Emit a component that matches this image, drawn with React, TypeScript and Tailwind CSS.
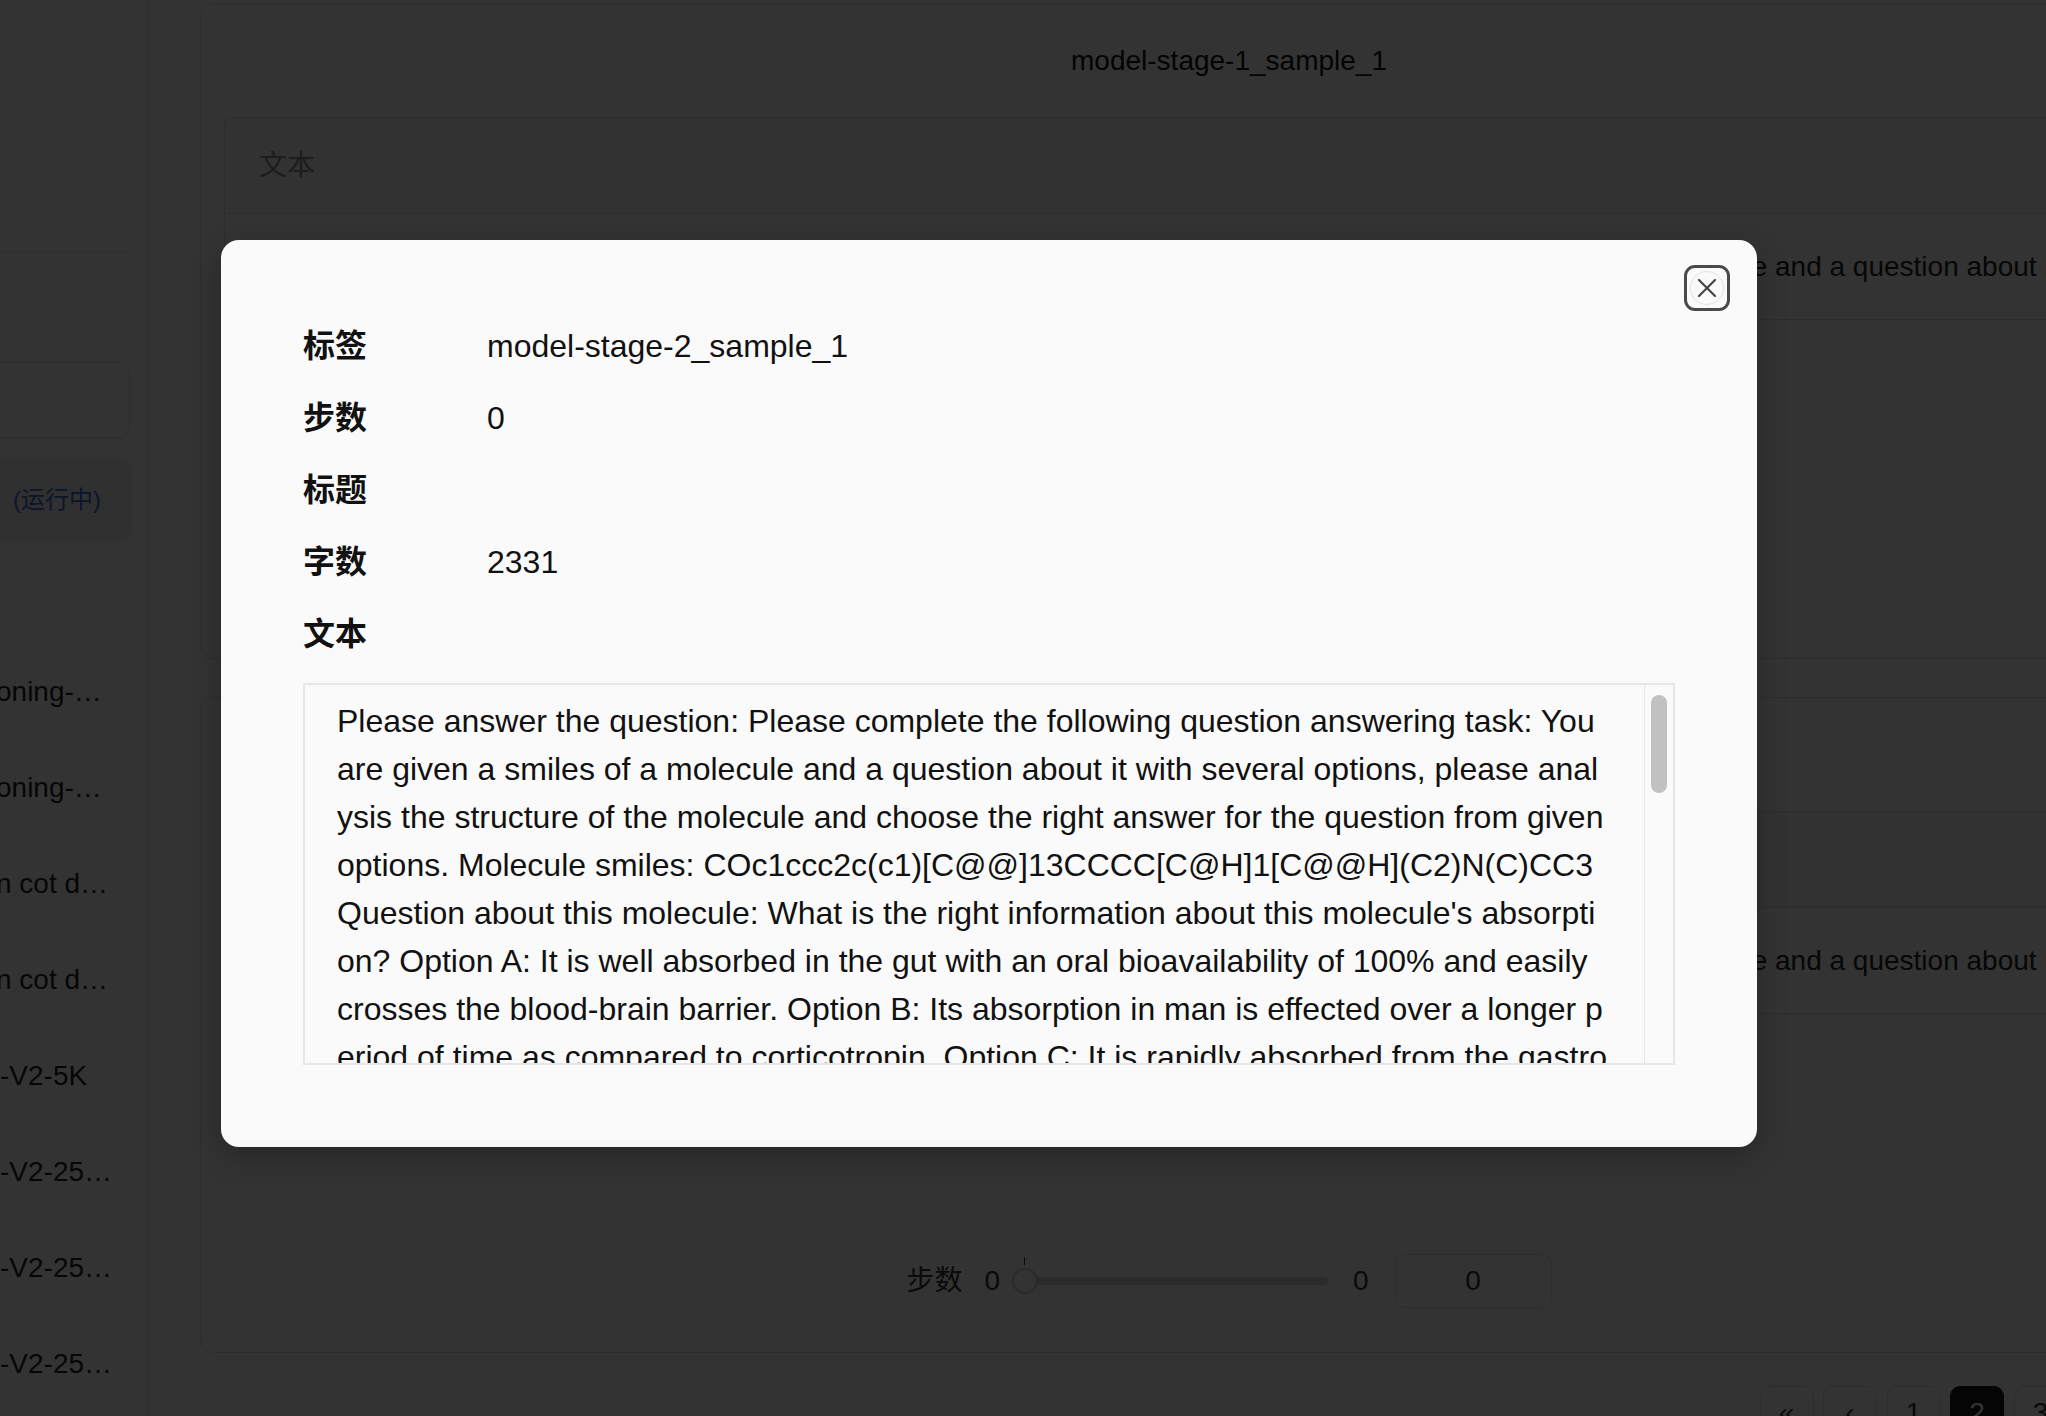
import { X } from 'lucide-react'

const PROMPT =
  "Please answer the question: Please complete the following question answering task: You are given a smiles of a molecule and a question about it with several options, please analysis the structure of the molecule and choose the right answer for the question from given options. Molecule smiles: COc1ccc2c(c1)[C@@]13CCCC[C@H]1[C@@H](C2)N(C)CC3 Question about this molecule: What is the right information about this molecule's absorption? Option A: It is well absorbed in the gut with an oral bioavailability of 100% and easily crosses the blood-brain barrier. Option B: Its absorption in man is effected over a longer period of time as compared to corticotropin. Option C: It is rapidly absorbed from the gastrointestinal tract and is subject to extensive first-pass metabolism. Option D: It is poorly absorbed after oral administration."

// sidebar is scrolled, only the tail of each run name shows
const RUNS = [
  { name: 'oning-…', cut: true },
  { name: 'oning-…', cut: true },
  { name: 'n cot d…', cut: true },
  { name: 'n cot d…', cut: true },
  { name: '-V2-5K', cut: false },
  { name: '-V2-25…', cut: false },
  { name: '-V2-25…', cut: false },
  { name: '-V2-25…', cut: false },
]

const PAGES = ['«', '‹', '1', '2', '3', '4', '›', '»']

const DETAILS: [string, string][] = [
  ['标签', 'model-stage-2_sample_1'],
  ['步数', '0'],
  ['标题', ''],
  ['字数', '2331'],
  ['文本', ''],
]

function SampleCard({ title }: { title: string }) {
  return (
    <div className="flex h-[656px] flex-col rounded-[14px] border border-[#e0e0e0]">
      <div className="flex h-[113px] items-center justify-center text-[28px] text-[#111]">{title}</div>
      <div className="mx-[23px] overflow-hidden rounded-[8px] border border-[#e0e0e0]">
        <div className="flex h-[96px] items-center border-b border-[#e0e0e0] bg-[#fafafa] pl-[34px] text-[28px] text-[#8c8c8c]">
          文本
        </div>
        <div className="flex h-[105px] items-center overflow-hidden whitespace-nowrap pl-[34px] text-[28px] text-[#262626]">
          {PROMPT}
        </div>
      </div>
      <div className="mt-[240px] flex items-center justify-center text-[28px] text-[#333]">
        <span>步数</span>
        <span className="ml-[22px]">0</span>
        <div className="relative ml-[12px] flex h-[26px] w-[316px] items-center">
          <div className="absolute left-[13px] right-0 h-[8px] rounded-full bg-[#d4d4d4]" />
          <div className="absolute left-[12px] top-[-11px] h-[8px] w-[1px] bg-[#444]" />
          <div className="relative h-[26px] w-[26px] rounded-full border-2 border-[#cfcfcf] bg-white" />
        </div>
        <span className="ml-[25px]">0</span>
        <div className="ml-[26px] flex h-[54px] w-[157px] items-center justify-center rounded-[10px] border border-[#e0e0e0]">
          0
        </div>
      </div>
    </div>
  )
}

export default function App() {
  return (
    <div className="relative h-[1416px] w-[2046px] overflow-hidden bg-white font-['Liberation_Sans','Noto_Sans_CJK_SC',sans-serif] text-[#222]">
      <div className="flex h-full">
        <aside className="w-[149px] shrink-0 overflow-hidden border-r border-[#e2e2e2]">
          <div className="h-[252px] w-[132px] border-b border-[#e6e6e6]" />
          <div className="-ml-[20px] mt-[110px] h-[76px] w-[150px] rounded-[10px] border border-[#e2e2e2]" />
          <div className="-ml-[20px] mt-[19px] flex h-[86px] w-[152px] items-center rounded-[14px] bg-[#f0f0f0] pl-[33px] text-[24px] text-[#3b6fd8]">
            (运行中)
          </div>
          <ul className="mt-[101px]">
            {RUNS.map((r, i) => (
              <li
                key={i}
                className={`flex h-[96px] items-center whitespace-nowrap text-[28px] text-[#1f1f1f] ${r.cut ? '-ml-[4px]' : ''}`}
              >
                {r.name}
              </li>
            ))}
          </ul>
        </aside>

        <main className="min-w-0 flex-1 pl-[51px] pt-[3px]">
          <div className="w-[2058px]">
            <SampleCard title="model-stage-1_sample_1" />
            <div className="mt-[38px]">
              <SampleCard title="model-stage-2_sample_1" />
            </div>
            <div className="mt-[33px] flex justify-end gap-[9.5px]">
              {PAGES.map((p, i) => (
                <div
                  key={i}
                  className={`flex h-[54px] w-[54px] items-center justify-center rounded-[10px] border text-[28px] ${
                    p === '2' ? 'border-[#1a1a1a] bg-[#1a1a1a] text-white' : 'border-[#e0e0e0] text-[#333]'
                  }`}
                >
                  {p}
                </div>
              ))}
            </div>
          </div>
        </main>
      </div>

      {/* modal */}
      <div className="absolute inset-0 bg-black/80" />
      <div className="absolute inset-0 flex items-start pl-[221px] pt-[240px]">
        <div className="relative w-[1536px] rounded-[18px] bg-[#fafafa] p-[82px] text-[#111] shadow-[0_10px_30px_rgba(0,0,0,0.25)]">
          <button className="absolute right-[27px] top-[25px] flex h-[46px] w-[46px] items-center justify-center rounded-[11px] border-[3px] border-[#4a4a4a] text-[#444]">
            <div className="flex h-[34px] w-[34px] items-center justify-center rounded-full border border-[#e2e2e2]">
              <X size={38} strokeWidth={1.6} />
            </div>
          </button>

          <div className="flex flex-col gap-[24px]">
            {DETAILS.map(([k, v]) => (
              <div key={k} className="grid grid-cols-[184px_1fr] text-[32px] leading-[48px]">
                <span className="font-bold">{k}</span>
                <span>{v}</span>
              </div>
            ))}
            <div className="mt-[1px] flex h-[382px] border-2 border-[#e6e6e6] bg-[#fafafa]">
              <div className="min-w-0 flex-1 overflow-hidden break-all pl-[32px] pr-[35px] pt-[12px] text-[32px] leading-[48px] text-[#111]">
                {PROMPT}
              </div>
              <div className="w-[29px] shrink-0 border-l border-[#e6e6e6]">
                <div className="mx-auto mt-[10px] h-[98px] w-[16px] rounded-full bg-[#c1c1c1]" />
              </div>
            </div>
          </div>
        </div>
      </div>
    </div>
  )
}
